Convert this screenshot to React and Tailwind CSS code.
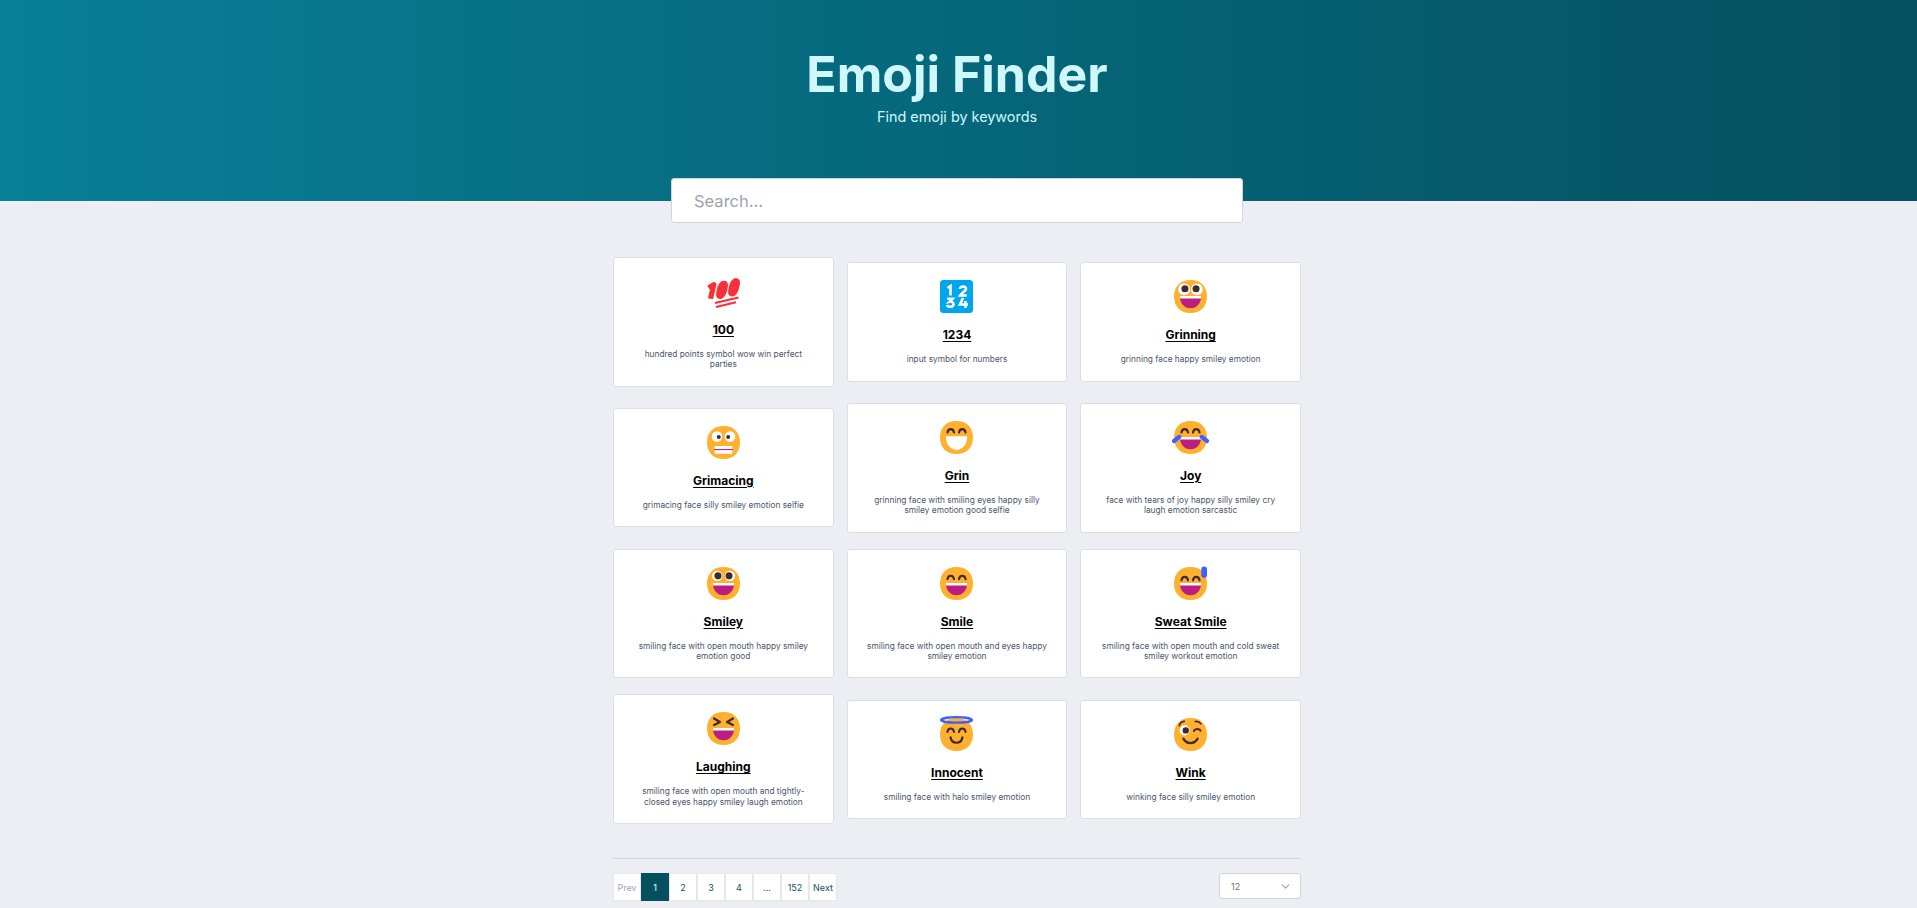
import { ChevronDown } from "lucide-react";

const MOUTH = "#BB1D80";
const DARK = "#402A32";
const FACE = "#FFB02E";
const BLUE = "#3F5FFF";

const Face = ({ children }) => (
  <svg viewBox="2 2 28 28" className="w-[33px] h-[33px] overflow-visible">
    <path
      d="M15.9989 29.9978C25.3333 29.9978 29.9978 23.7303 29.9978 15.9989C29.9978 8.26751 25.3333 2 15.9989 2C6.66443 2 2 8.26751 2 15.9989C2 23.7303 6.66443 29.9978 15.9989 29.9978Z"
      fill={FACE}
    />
    {children}
  </svg>
);

const OpenMouth = () => (
  <>
    <path d="M7 15.500h18c.3 5.800-3.800 10.500-9 10.500s-9.300-4.700-9-10.500z" fill={MOUTH} />
    <path d="M7 15.500h18c.03.7 0 1.400-.1 2.200H7.100c-.1-.8-.13-1.500-.1-2.200z" fill="#fff" />
  </>
);

const SmileEyes = ({ y = 0 }) => (
  <g fill="none" stroke={DARK} strokeWidth="1.800" strokeLinecap="round" transform={`translate(0 ${y})`}>
    <path d="M8.300 12.300c.3-1.900 1.400-2.900 2.800-2.900s2.500 1 2.800 2.900" />
    <path d="M18.100 12.300c.3-1.900 1.400-2.900 2.800-2.900s2.500 1 2.800 2.900" />
  </g>
);

const RoundEyes = ({ r = 5, pupil = 3, cy = 10, py = 9.500 }) => (
  <>
    <circle cx="10.600" cy={cy} r={r} fill="#fff" />
    <circle cx="21.400" cy={cy} r={r} fill="#fff" />
    <circle cx="11.300" cy={py} r={pupil} fill={DARK} />
    <circle cx="20.700" cy={py} r={pupil} fill={DARK} />
  </>
);

const hundredPaths = (
  <>
    <path d="M2 9.500 7 6.500 3.800 20.500" />
    <path d="M15.300 6c1.700-1.500 3.500-1 3.200 1.800-.4 3.700-1.600 7.900-3.400 9.700-1.700 1.600-3.400 1-3.100-1.800.4-3.700 1.500-8 3.300-9.700z" />
    <path d="M27.300 3.500c1.700-1.500 3.500-1 3.200 1.800-.4 3.700-1.600 7.900-3.400 9.700-1.700 1.600-3.400 1-3.100-1.800.4-3.700 1.500-8 3.300-9.700z" />
  </>
);

const Hundred = () => (
  <svg viewBox="0 0 33 30" className="w-[33px] h-[30px] mt-[3px] overflow-visible">
    <g fill="none" stroke="#FF6723" strokeWidth="4.800" strokeLinejoin="round" transform="translate(-.6 .2)">
      {hundredPaths}
    </g>
    <g fill="none" stroke="#F92F3C" strokeWidth="4.800" strokeLinejoin="round">
      {hundredPaths}
    </g>
    <path d="M8 25 31.500 19.500" stroke="#F92F3C" strokeWidth="2.200" />
    <path d="M9 29 29 24.300" stroke="#F92F3C" strokeWidth="2.200" />
  </svg>
);

const Input = () => (
  <svg viewBox="0 0 33 33" className="w-[33px] h-[33px]">
    <rect width="33" height="33" rx="3.500" fill="#00A6ED" />
    <g fill="none" stroke="#fff" strokeWidth="2.600">
      <path d="M7.500 8 10.500 6V15.500" />
      <path d="M20 9c.3-3.400 6-3.400 6 0 0 2.500-4.400 3.400-6 6.500h6.800" />
      <path d="M7 18.800h5.500l-3 3c2.500-.5 4 .800 4 2.400 0 3.200-5.500 3.400-6.600 .8" />
      <path d="M23 18 20 24.500H28M25.500 21v7" />
    </g>
  </svg>
);

const emojis = {
  grinning: (
    <Face>
      <RoundEyes />
      <OpenMouth />
    </Face>
  ),
  grimacing: (
    <Face>
      <circle cx="10.500" cy="11" r="4.500" fill="#fff" />
      <circle cx="21.500" cy="11" r="4.500" fill="#fff" />
      <circle cx="12" cy="11.300" r="1.700" fill={DARK} />
      <circle cx="20" cy="11.300" r="1.700" fill={DARK} />
      <rect x="8.500" y="19" width="15" height="6.500" rx=".5" fill="#fff" />
      <path d="M8 22h16" stroke={MOUTH} strokeWidth=".9" />
    </Face>
  ),
  grin: (
    <Face>
      <SmileEyes y={-.5} />
      <path d="M7 15h18c.3 6.500-3.800 11.500-9 11.500S6.700 21.500 7 15z" fill="#fff" />
    </Face>
  ),
  joy: (
    <Face>
      <SmileEyes y={-.5} />
      <OpenMouth />
      <path d="M2 19 6.500 15.500" stroke={BLUE} strokeWidth="3.600" strokeLinecap="round" />
      <path d="M30 19 25.500 15.500" stroke={BLUE} strokeWidth="3.600" strokeLinecap="round" />
    </Face>
  ),
  smiley: (
    <Face>
      <RoundEyes r={4.400} pupil={3} cy={9.500} py={9.500} />
      <OpenMouth />
    </Face>
  ),
  smile: (
    <Face>
      <SmileEyes />
      <OpenMouth />
    </Face>
  ),
  sweat: (
    <Face>
      <SmileEyes y={1} />
      <OpenMouth />
      <rect x="25.200" y="1.600" width="4.800" height="9.500" rx="2.400" fill={BLUE} />
    </Face>
  ),
  laughing: (
    <Face>
      <g fill="none" stroke={DARK} strokeWidth="1.900" strokeLinecap="round" strokeLinejoin="round">
        <path d="M8 7.500 13 10.500 8 13" />
        <path d="M24 7.500 19 10.500 24 13" />
      </g>
      <OpenMouth />
    </Face>
  ),
  innocent: (
    <Face>
      <SmileEyes y={1.500} />
      <path d="M11 18.500c1 6 9 6 10 0" fill="none" stroke={DARK} strokeWidth="1.900" strokeLinecap="round" />
      <ellipse cx="16" cy="3.600" rx="13" ry="2.300" fill="none" stroke={BLUE} strokeWidth="2" />
    </Face>
  ),
  wink: (
    <Face>
      <circle cx="11" cy="12.500" r="4.300" fill="#fff" />
      <circle cx="12" cy="12.500" r="2.700" fill={DARK} />
      <g fill="none" stroke={DARK} strokeWidth="1.400" strokeLinecap="round">
        <path d="M6.500 8.500c.5-2 2.200-3.400 4.200-3.600" />
        <path d="M20 5c2-.3 3.800.4 4.800 2" />
        <path d="M19 13c.8-2.200 4.200-2.200 5.500-.3" strokeWidth="1.800" />
        <path d="M10 19.500c2.500 5 9.500 5 12 0" strokeWidth="1.900" />
      </g>
    </Face>
  ),
};

const rows = [
  { title: "100", desc: "hundred points symbol wow win perfect parties", icon: <Hundred /> },
  { title: "1234", desc: "input symbol for numbers", icon: <Input /> },
  { title: "Grinning", desc: "grinning face happy smiley emotion", icon: emojis.grinning },
  { title: "Grimacing", desc: "grimacing face silly smiley emotion selfie", icon: emojis.grimacing },
  { title: "Grin", desc: "grinning face with smiling eyes happy silly smiley emotion good selfie", icon: emojis.grin },
  { title: "Joy", desc: "face with tears of joy happy silly smiley cry laugh emotion sarcastic", icon: emojis.joy },
  { title: "Smiley", desc: "smiling face with open mouth happy smiley emotion good", icon: emojis.smiley },
  { title: "Smile", desc: "smiling face with open mouth and eyes happy smiley emotion", icon: emojis.smile },
  { title: "Sweat Smile", desc: "smiling face with open mouth and cold sweat smiley workout emotion", icon: emojis.sweat },
  { title: "Laughing", desc: "smiling face with open mouth and tightly-closed eyes happy smiley laugh emotion", icon: emojis.laughing },
  { title: "Innocent", desc: "smiling face with halo smiley emotion", icon: emojis.innocent },
  { title: "Wink", desc: "winking face silly smiley emotion", icon: emojis.wink },
];

const pages = ["Prev", "1", "2", "3", "4", "...", "152", "Next"];

const EmojiCard = ({ item }) => (
  <div className="bg-white rounded-[3px] border border-[#dcdee4] pt-[17px] pb-[16px] flex flex-col items-center text-center">
    {item.icon}
    <h2 className="mt-[14px] text-[12px] leading-[15px] font-bold text-black underline underline-offset-[2px]">
      {item.title}
    </h2>
    <p className="mt-[12px] text-[8.32px] leading-[10.4px] text-[#4a5568] w-[184px]">{item.desc}</p>
  </div>
);

export default function App() {
  return (
    <div className="min-h-screen overflow-hidden bg-[#eceef3] font-['Inter',sans-serif]">
      <header className="h-[201px] bg-gradient-to-r from-[#087f97] to-[#04505f] pr-[3px] pt-[46px] text-center text-[#cff8fe]">
        <h1 className="text-[50px] leading-[56px] font-bold">Emoji Finder</h1>
        <p className="text-[14.4px] leading-[20px] mt-[5px]">Find emoji by keywords</p>
      </header>

      <div className="pr-[3px]">
        <input
          placeholder="Search..."
          className="block mx-auto -mt-[23px] w-[572px] h-[45px] rounded-[3px] bg-white border border-[#d1d5db] px-[22px] text-[16.5px] text-gray-700 placeholder:text-[#9ca3af] outline-none"
        />

        <main className="mx-auto w-[688px] mt-[34px]">
          <div className="grid grid-cols-3 gap-x-[13px] gap-y-[16px] items-center">
            {rows.map((item) => (
              <EmojiCard key={item.title} item={item} />
            ))}
          </div>

          <div className="mt-[34px] pt-[14px] border-t border-[#d1d5db] flex justify-between items-start">
            <nav className="flex text-[9px] text-[#164e63]">
              {pages.map((page) => (
                <button
                  key={page}
                  className={
                    page === "1"
                      ? "w-[28px] h-[28px] bg-[#04505f] text-white"
                      : page === "Prev"
                        ? "w-[28px] h-[28px] bg-white border border-[#e5e7eb] text-[#9ca3af]"
                        : "w-[28px] h-[28px] bg-white border border-[#e5e7eb]"
                  }
                >
                  {page}
                </button>
              ))}
            </nav>
            <div className="w-[82px] h-[26px] bg-white border border-[#d1d5db] rounded-[3px] pl-[11px] pr-[8px] flex items-center justify-between text-[9px] text-[#6b7280]">
              <span>12</span>
              <ChevronDown className="w-[13px] h-[13px] text-[#9ca3af]" />
            </div>
          </div>
        </main>
      </div>
    </div>
  );
}
